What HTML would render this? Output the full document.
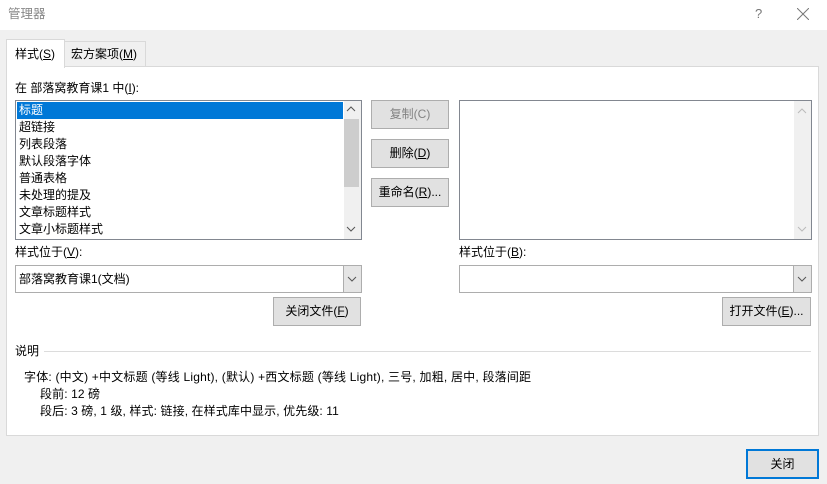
<!DOCTYPE html>
<html><head><meta charset="utf-8"><style>
*{box-sizing:border-box;margin:0;padding:0}
body{width:827px;height:484px;background:#f0f0f0;font-family:"Liberation Sans","Noto Sans CJK SC",sans-serif;font-size:12px;color:#000;position:relative;overflow:hidden}
.a{position:absolute;white-space:nowrap;line-height:16px}
.btn{position:absolute;background:#e1e1e1;border:1px solid #adadad;text-align:center;line-height:26px}
u{text-decoration:underline}
</style></head><body>
<div class="a" style="left:0;top:0;width:827px;height:30px;background:#fff"></div>
<div class="a" style="left:8px;top:6px;color:#888;font-size:12.5px">管理器</div>
<div class="a" style="left:755px;top:6px;color:#777;font-size:13px">?</div>
<svg class="a" style="left:797px;top:8px" width="12" height="12"><path d="M0 0L12 12M12 0L0 12" stroke="#777" stroke-width="1"/></svg>

<div class="a" style="left:6px;top:66px;width:813px;height:370px;background:#fff;border:1px solid #d9d9d9"></div>
<div class="a" style="left:64px;top:41px;width:82px;height:26px;background:#f0f0f0;border:1px solid #d9d9d9"></div>
<div class="a" style="left:71px;top:46px">宏方案项(<u>M</u>)</div>
<div class="a" style="left:6px;top:39px;width:59px;height:29px;background:#fff;border:1px solid #d9d9d9;border-bottom:none"></div>
<div class="a" style="left:15px;top:46px">样式(<u>S</u>)</div>

<div class="a" style="left:15px;top:80px">在 部落窝教育课1 中(<u>I</u>):</div>
<div class="a" style="left:15px;top:100px;width:347px;height:140px;background:#fff;border:1px solid #828790"></div>
<div class="a" style="left:17px;top:102px;width:326px;height:17px;background:#0078d7"></div>
<div class="a" style="left:344px;top:101px;width:17px;height:138px;background:#f0f0f0"></div>
<div class="a" style="left:344px;top:119px;width:15px;height:68px;background:#cdcdcd"></div>
<svg class="a" style="left:346px;top:106px" width="10" height="6"><path d="M1 5L5 1L9 5" stroke="#555" fill="none"/></svg>
<svg class="a" style="left:346px;top:226px" width="10" height="6"><path d="M1 1L5 5L9 1" stroke="#555" fill="none"/></svg>
<div class="a" style="left:19px;top:102px;line-height:17px;color:#fff">标题</div>
<div class="a" style="left:19px;top:119px;line-height:17px">超链接<br>列表段落<br>默认段落字体<br>普通表格<br>未处理的提及<br>文章标题样式<br>文章小标题样式</div>

<div class="btn" style="left:371px;top:100px;width:78px;height:29px;color:#838383">复制(C)</div>
<div class="btn" style="left:371px;top:139px;width:78px;height:29px">删除(<u>D</u>)</div>
<div class="btn" style="left:371px;top:178px;width:78px;height:29px">重命名(<u>R</u>)...</div>

<div class="a" style="left:459px;top:100px;width:353px;height:140px;background:#fff;border:1px solid #828790"></div>
<div class="a" style="left:794px;top:101px;width:17px;height:138px;background:#f0f0f0"></div>
<svg class="a" style="left:797px;top:108px" width="10" height="6"><path d="M1 5L5 1L9 5" stroke="#bbb" fill="none"/></svg>
<svg class="a" style="left:797px;top:226px" width="10" height="6"><path d="M1 1L5 5L9 1" stroke="#bbb" fill="none"/></svg>

<div class="a" style="left:15px;top:244px">样式位于(<u>V</u>):</div>
<div class="a" style="left:15px;top:265px;width:347px;height:28px;background:#fff;border:1px solid #adadad"></div>
<div class="a" style="left:343px;top:266px;width:18px;height:26px;background:#e5e5e5;border-left:1px solid #adadad"></div>
<svg class="a" style="left:347px;top:276px" width="10" height="6"><path d="M1 1L5 5L9 1" stroke="#555" fill="none"/></svg>
<div class="a" style="left:19px;top:271px">部落窝教育课1(文档)</div>
<div class="btn" style="left:273px;top:297px;width:88px;height:29px">关闭文件(<u>F</u>)</div>

<div class="a" style="left:459px;top:244px">样式位于(<u>B</u>):</div>
<div class="a" style="left:459px;top:265px;width:353px;height:28px;background:#fff;border:1px solid #adadad"></div>
<div class="a" style="left:793px;top:266px;width:18px;height:26px;background:#e5e5e5;border-left:1px solid #adadad"></div>
<svg class="a" style="left:797px;top:276px" width="10" height="6"><path d="M1 1L5 5L9 1" stroke="#555" fill="none"/></svg>
<div class="btn" style="left:722px;top:297px;width:89px;height:29px">打开文件(<u>E</u>)...</div>

<div class="a" style="left:15px;top:343px">说明</div>
<div class="a" style="left:44px;top:351px;width:767px;height:1px;background:#dcdcdc"></div>
<div class="a" style="left:24px;top:369px;line-height:17px;letter-spacing:0.2px">字体: (中文) +中文标题 (等线 Light), (默认) +西文标题 (等线 Light), 三号, 加粗, 居中, 段落间距</div>
<div class="a" style="left:40px;top:386px;line-height:17px;letter-spacing:0.1px">段前: 12 磅<br>段后: 3 磅, 1 级, 样式: 链接, 在样式库中显示, 优先级: 11</div>

<div class="btn" style="left:746px;top:449px;width:73px;height:30px;border:2px solid #0078d7;line-height:26px">关闭</div>
</body></html>
